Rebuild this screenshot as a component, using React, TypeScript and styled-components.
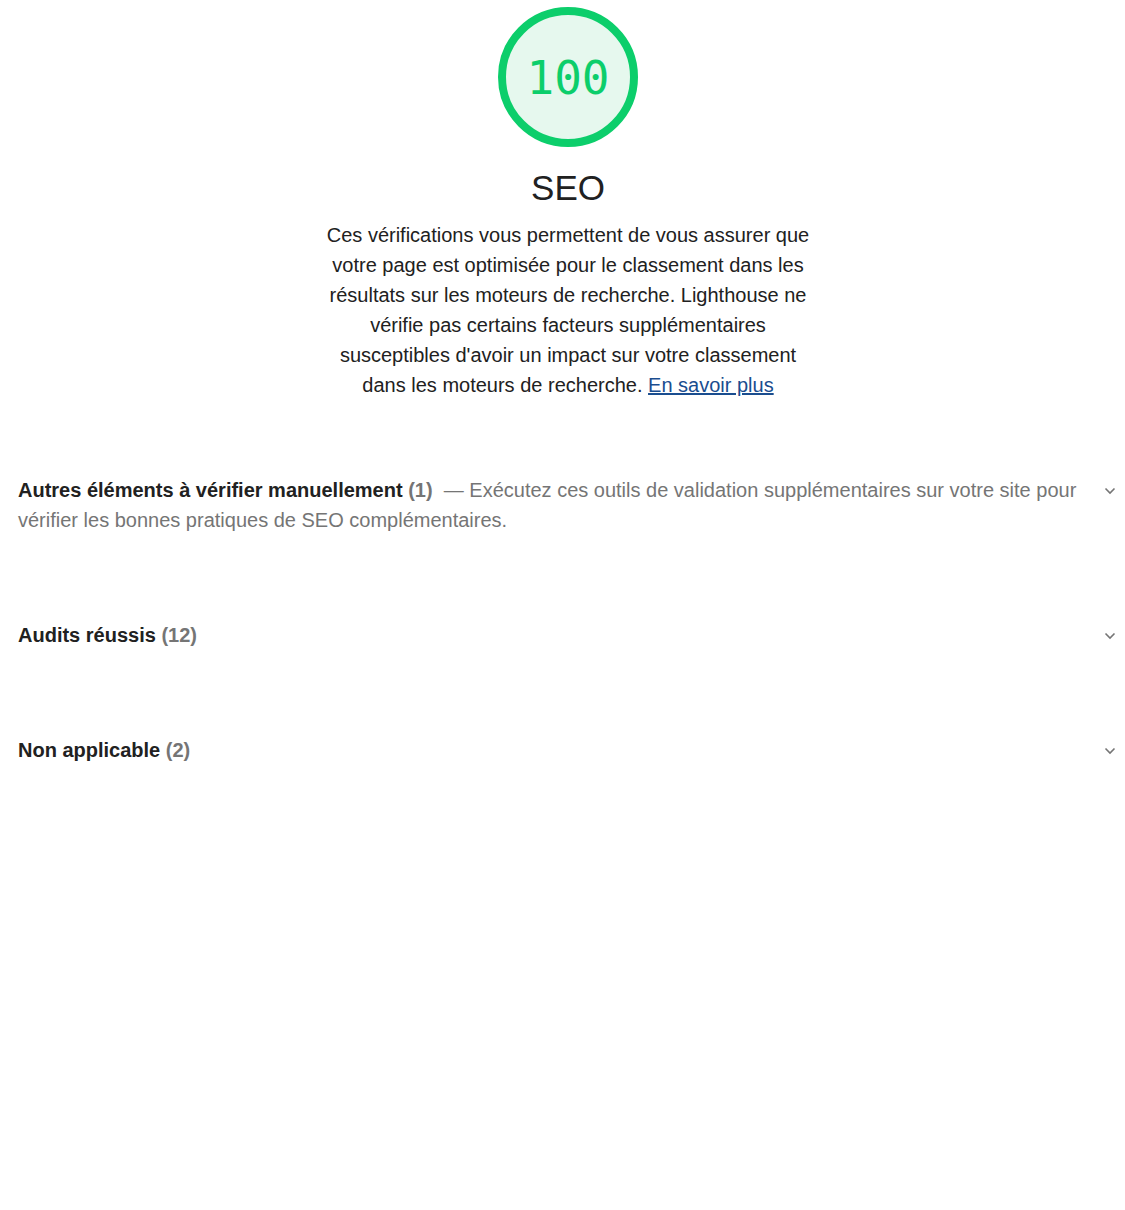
import React from "react";
import styled, { createGlobalStyle } from "styled-components";

const Global = createGlobalStyle`
  html, body { margin: 0; padding: 0; background: #fff; }
  body { font-family: "Liberation Sans", Arial, sans-serif; color: #212121; }
`;

const Page = styled.div`
  width: 1125px;
  padding: 7px 7px 0 18px;
  box-sizing: border-box;
`;

const Header = styled.header`
  display: flex;
  flex-direction: column;
  align-items: center;
`;

const GaugeWrap = styled.div`
  position: relative;
  width: 140px;
  height: 140px;
`;

const GaugeValue = styled.div`
  position: absolute;
  inset: 0;
  display: flex;
  align-items: center;
  justify-content: center;
  font-family: "DejaVu Sans Mono", "Liberation Mono", monospace;
  font-size: 46px;
  color: #0cce6b;
  padding-top: 2px;
`;

const Title = styled.h1`
  margin: 19px 0 0;
  font-weight: 400;
  font-size: 35px;
  line-height: 44px;
  color: #212121;
`;

const Description = styled.p`
  margin: 10px 0 0;
  width: 495px;
  text-align: center;
  font-size: 20px;
  line-height: 30px;
  color: #212121;
`;

const Link = styled.a`
  color: #1a4d8f;
  text-decoration: underline;
`;

const Sections = styled.div`
  display: flex;
  flex-direction: column;
  gap: 85px;
  margin-top: 75px;
`;

const Section = styled.div`
  display: flex;
  align-items: flex-start;
  gap: 16px;
`;

const SectionText = styled.div`
  flex: 1;
  font-size: 20px;
  line-height: 30px;
  color: #757575;
`;

const SectionTitle = styled.span`
  font-weight: 700;
  color: #212121;
`;

const Count = styled.span`
  font-weight: 700;
  color: #757575;
`;

const Chevron = styled.div`
  width: 16px;
  height: 30px;
  display: flex;
  align-items: center;
  justify-content: center;
  padding-top: 2px;
  box-sizing: border-box;
`;

const ChevronIcon = () => (
  <svg width="12" height="8" viewBox="0 0 12 8">
    <path d="M1.5 1.5 L6 6 L10.5 1.5" fill="none" stroke="#757575" strokeWidth="1.6" />
  </svg>
);

const Gauge = ({ value }: { value: number }) => (
  <GaugeWrap>
    <svg width="140" height="140" viewBox="0 0 140 140">
      <circle cx="70" cy="70" r="66" fill="#e6f8ee" stroke="#0cce6b" strokeWidth="8" />
    </svg>
    <GaugeValue>{value}</GaugeValue>
  </GaugeWrap>
);

const sections = [
  {
    title: "Autres éléments à vérifier manuellement",
    count: 1,
    desc: "Exécutez ces outils de validation supplémentaires sur votre site pour vérifier les bonnes pratiques de SEO complémentaires.",
  },
  { title: "Audits réussis", count: 12 },
  { title: "Non applicable", count: 2 },
];

export default function App() {
  return (
    <>
      <Global />
      <Page>
        <Header>
          <Gauge value={100} />
          <Title>SEO</Title>
          <Description>
            Ces vérifications vous permettent de vous assurer que votre page est optimisée pour le classement dans les résultats sur les moteurs de recherche. Lighthouse ne vérifie pas certains facteurs supplémentaires susceptibles d'avoir un impact sur votre classement dans les moteurs de recherche.{" "}
            <Link href="#">En savoir plus</Link>
          </Description>
        </Header>
        <Sections>
          {sections.map((s) => (
            <Section key={s.title}>
              <SectionText>
                <SectionTitle>{s.title}</SectionTitle> <Count>({s.count})</Count>
                {s.desc ? <> &nbsp;— {s.desc}</> : null}
              </SectionText>
              <Chevron>
                <ChevronIcon />
              </Chevron>
            </Section>
          ))}
        </Sections>
      </Page>
    </>
  );
}
